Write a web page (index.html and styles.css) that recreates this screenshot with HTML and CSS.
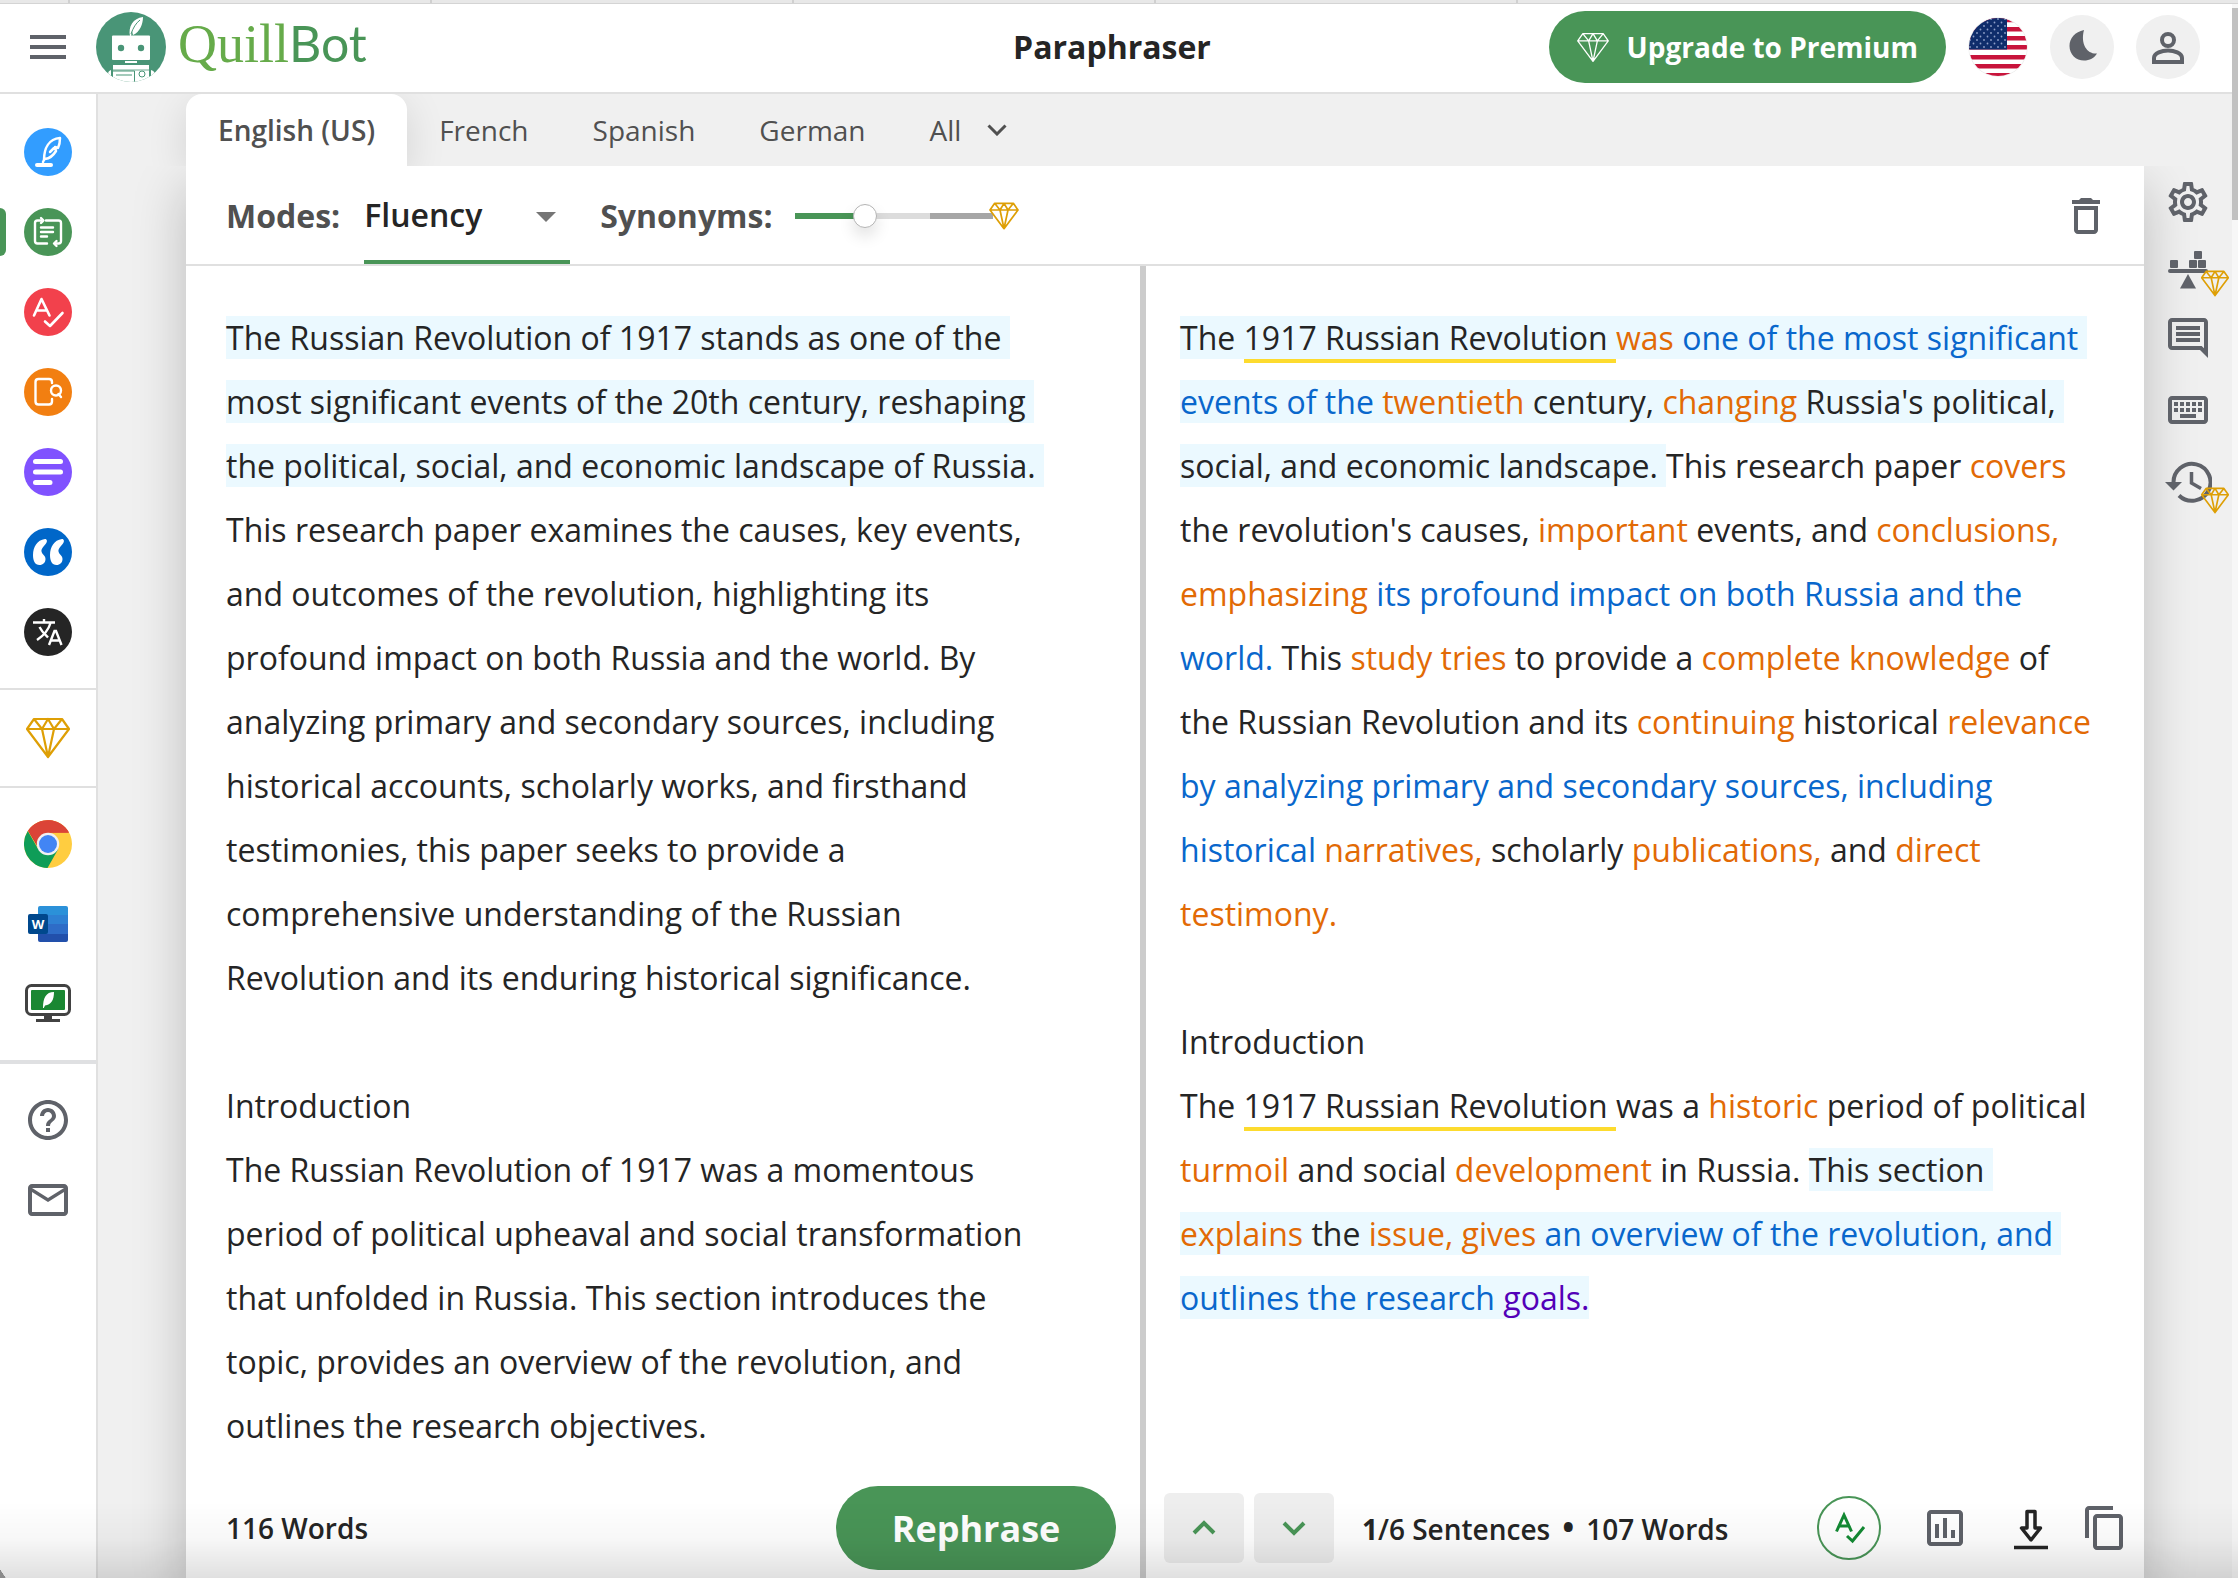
FILE: index.html
```html
<!DOCTYPE html>
<html lang="en">
<head>
<meta charset="utf-8">
<title>Paraphraser - QuillBot</title>
<meta name="viewport" content="width=device-width, initial-scale=1">
<link rel="stylesheet" href="styles.css">
</head>
<body>
<svg class="defs" aria-hidden="true">
  <symbol id="diamond" viewBox="0 0 44 42">
    <path d="M8 2H36L43 12L22 40L1 12ZM1 12H43M8 2L16 12L22 2L28 12L36 2M16 12L22 40L28 12" fill="none" stroke="currentColor" stroke-linejoin="round"/>
  </symbol>
</svg>

<div class="tabstrip"><i></i><i></i><i></i><i></i><i></i><i class="current"></i></div>

<div class="page">
  <div class="content">
    <header class="header">
      <div class="brand">
        <button class="icon-btn" aria-label="Menu">
          <svg class="i48" viewBox="0 0 24 24" fill="currentColor"><path d="M3 18h18v-2H3v2zm0-5h18v-2H3v2zm0-7v2h18V6H3z"/></svg>
        </button>
        <a class="logo" href="#" aria-label="QuillBot home">
          <svg class="logo-mark" viewBox="0 0 70 70">
            <defs><clipPath id="lc"><circle cx="35" cy="35" r="35"/></clipPath></defs>
            <circle cx="35" cy="35" r="35" fill="#499577"/>
            <g clip-path="url(#lc)">
              <rect x="16" y="23.500" width="38" height="24.500" rx="1" fill="#fff"/>
              <circle cx="25" cy="36" r="3.200" fill="#499577"/><circle cx="45" cy="36" r="3.200" fill="#499577"/>
              <path d="M34 24C32 15 37 6 47 5C47 12 44 20 37 23L36 19L35 24Z" fill="#fff"/>
              <path d="M35 22C37 16 40 11 44 8" stroke="#499577" fill="none"/>
              <rect x="29" y="49" width="12" height="2" fill="#fff"/>
              <rect x="17" y="53" width="36" height="17" fill="#fff"/>
              <path d="M12 70V62Q12 59 15 58V70ZM55 58Q59 59 59 63V70H55Z" fill="#fff"/>
              <path d="M16.500 70V59H38.500V70M20 63H36" stroke="#499577" fill="none"/>
              <circle cx="46" cy="62" r="3" stroke="#499577" fill="none"/>
              <path d="M17 58H53" stroke="#499577" stroke-width=".8"/>
            </g>
          </svg>
          <span class="wordmark"><span class="wm-quill">Quill</span><span class="wm-bot">Bot</span></span>
        </a>
      </div>
      <h1 class="title">Paraphraser</h1>
      <div class="header-actions">
        <button class="upgrade"><svg class="gem-up" stroke-width="1.800"><use href="#diamond"/></svg>Upgrade to Premium</button>
        <button class="flag" aria-label="Language: US English">
          <svg viewBox="0 0 60 60">
            <defs><clipPath id="fc"><circle cx="30" cy="30" r="29"/></clipPath>
            <pattern id="stars" width="7" height="7" patternUnits="userSpaceOnUse"><circle cx="2" cy="2" r=".9" fill="#8fa0c8"/><circle cx="5.500" cy="5.500" r=".9" fill="#8fa0c8"/></pattern></defs>
            <circle cx="30" cy="30" r="30" fill="#f0f0f0"/>
            <g clip-path="url(#fc)">
              <rect width="60" height="60" fill="#fff"/>
              <path d="M0 3H60M0 12.300H60M0 21.200H60M0 30.300H60M0 40.300H60M0 49.300H60M0 58.300H60" stroke="#c8143c" stroke-width="4.600"/>
              <rect width="39" height="32.500" fill="#0f2d6b"/><rect width="39" height="32" fill="url(#stars)"/>
            </g>
          </svg>
        </button>
        <button class="round" aria-label="Dark mode"><svg viewBox="0 0 64 64" fill="currentColor"><path d="M34 15C25 17 19.500 23 19.500 31C19.500 39.500 26 45.500 34 45.500C39.500 45.500 44.500 43 47 38.500C38 39.500 30 30 34 15Z"/></svg></button>
        <button class="round" aria-label="Account"><svg viewBox="0 0 64 64" fill="none" stroke="currentColor" stroke-width="4"><circle cx="32" cy="25" r="6"/><path d="M18 47V43C18 38 26 35.500 32 35.500S46 38 46 43V47Z"/></svg></button>
      </div>
    </header>

    <div class="app">
      <nav class="sidebar" aria-label="Tools">
        <ul class="tools">
          <li><a href="#" aria-label="Co-writer"><svg viewBox="0 0 48 48"><circle cx="24" cy="24" r="24" fill="#329dff"/><g fill="none" stroke="#fff" stroke-width="2.500" stroke-linecap="round" stroke-linejoin="round"><path d="M20 32C20 20 25 11 36 10C36 14 35.500 17 34 20L31 19L32 23C29 28 25 30.500 21 31M20 32L19 34M26 24L30 20"/><path d="M13 37H27" stroke-width="4"/></g></svg></a></li>
          <li class="active"><a href="#" aria-label="Paraphraser" aria-current="page"><svg viewBox="0 0 48 48"><circle cx="24" cy="24" r="24" fill="#499557"/><g fill="none" stroke="#fff" stroke-width="2.400" stroke-linecap="round" stroke-linejoin="round"><path d="M17 12.500H13.500Q11 12.500 11 15V33Q11 35.500 13.500 35.500H23M31 35.500H34.500Q37 35.500 37 33V15Q37 12.500 34.500 12.500H22"/><path d="M17 10L19.500 12.500L17 15M32.500 33L30 35.500L32.500 38M17 19.500H29M17 24H29M17 28.500H23"/></g></svg></a></li>
          <li><a href="#" aria-label="Grammar checker"><svg viewBox="0 0 48 48"><circle cx="24" cy="24" r="24" fill="#f2414c"/><g fill="none" stroke="#fff" stroke-width="2.600" stroke-linecap="round" stroke-linejoin="round"><path d="M10 27.500L17.500 11L25.500 27.500M13 22.500H22.500"/><path d="M21 33.500L26 38L38.500 25"/></g></svg></a></li>
          <li><a href="#" aria-label="Plagiarism checker"><svg viewBox="0 0 48 48"><circle cx="24" cy="24" r="24" fill="#f27f11"/><g fill="none" stroke="#fff" stroke-width="2.400" stroke-linecap="round"><path d="M28 15V14Q28 11 25 11H14.500Q11.500 11 11.500 14V33.500Q11.500 36.500 14.500 36.500H25Q28 36.500 28 33.500V31"/><circle cx="32" cy="22.500" r="5"/><path d="M34.500 26L37 29"/></g></svg></a></li>
          <li><a href="#" aria-label="Summarizer"><svg viewBox="0 0 48 48"><circle cx="24" cy="24" r="24" fill="#8052ff"/><path d="M11.500 13.500H36.500M11.500 24H36.500M11.500 34.500H26" stroke="#fff" stroke-width="5" stroke-linecap="round"/></svg></a></li>
          <li><a href="#" aria-label="Citation generator"><svg viewBox="0 0 48 48"><circle cx="24" cy="24" r="24" fill="#0067c9"/><g fill="#fff"><path id="q" d="M21 11C13 12 9 19 9 27C9 33 11 37 15.500 37C19 37 21.500 34.500 21.500 31C21.500 27 18.500 27.500 17.500 23.500C17 21 20 18 22 15.500C24 12.500 22.500 11 21 11Z"/><use href="#q" x="17"/></g></svg></a></li>
          <li><a href="#" aria-label="Translator"><svg viewBox="0 0 48 48"><circle cx="24" cy="24" r="24" fill="#252525"/><g fill="none" stroke="#fff" stroke-width="2.400"><path d="M9 14.500H31M20 11V15M26.500 15C24.500 22 19 28 13 32M15.500 19C18 24 21 26.500 24 29.500"/><path d="M25 37L30.500 23H32L37.500 37M27 32.500H35.500"/></g></svg></a></li>
        </ul>
        <ul class="premium">
          <li><a href="#" aria-label="Premium"><svg class="gem-side" stroke-width="2.200"><use href="#diamond"/></svg></a></li>
        </ul>
        <ul class="extensions">
          <li><a href="#" aria-label="Chrome extension"><svg viewBox="0 0 48 48"><circle cx="24" cy="24" r="24" fill="#ffcd40"/><path d="M24 24L4.200 10.500A24 24 0 0 1 44.900 12.500H24Z" fill="#db4437"/><path d="M3.800 11A24 24 0 0 0 23.500 48L34 29.500L24 24L13.800 28.500Z" fill="#0f9d58"/><path d="M4.200 11L13.700 27L24 13L44.900 12.800H24Z" fill="#c23a2e"/><path d="M4.200 10.500A24 24 0 0 1 44.900 12.700H24L13.500 25Z" fill="#db4437"/><circle cx="24" cy="24" r="11.200" fill="#f1f1f1"/><circle cx="24" cy="24" r="9" fill="#4285f4"/></svg></a></li>
          <li><a href="#" aria-label="Word add-in"><svg viewBox="0 0 48 48"><path d="M16 6H42a2 2 0 0 1 2 2V15H14V8a2 2 0 0 1 2-2Z" fill="#2b91d9"/><path d="M14 15H44V24H14Z" fill="#2e80d3"/><path d="M14 24H44V34H14Z" fill="#2e6cc7"/><path d="M14 34H44V40a2 2 0 0 1-2 2H16a2 2 0 0 1-2-2Z" fill="#2250ab"/><rect x="4" y="14" width="20" height="20" rx="2" fill="#00488d"/><text x="14" y="29" class="word-w">W</text></svg></a></li>
          <li><a href="#" aria-label="Desktop app"><svg viewBox="0 0 48 48"><rect x="2.500" y="5.500" width="43" height="29" rx="5" fill="#fff" stroke="#424242" stroke-width="3"/><rect x="7" y="10" width="34" height="20" rx="1" fill="#1a8732"/><path d="M19 28C19 18 22 12 30 12C30 20 27 25 21 25.500L19.800 28Z" fill="#fff"/><path d="M20 35H28V39H36V42H12V39H20Z" fill="#424242"/></svg></a></li>
        </ul>
        <ul class="support">
          <li><a href="#" aria-label="Help"><svg viewBox="0 0 24 24" fill="currentColor"><path d="M11 18h2v-2h-2v2zm1-16C6.480 2 2 6.480 2 12s4.480 10 10 10 10-4.480 10-10S17.520 2 12 2zm0 18c-4.410 0-8-3.590-8-8s3.590-8 8-8 8 3.590 8 8-3.590 8-8 8zm0-14c-2.210 0-4 1.790-4 4h2c0-1.100.9-2 2-2s2 .9 2 2c0 2-3 1.750-3 5h2c0-2.250 3-2.500 3-5 0-2.210-1.790-4-4-4z"/></svg></a></li>
          <li><a href="#" aria-label="Contact"><svg viewBox="0 0 24 24" fill="currentColor"><path d="M22 6c0-1.100-.9-2-2-2H4c-1.100 0-2 .9-2 2v12c0 1.100.9 2 2 2h16c1.100 0 2-.9 2-2V6zm-2 0l-8 5-8-5h16zm0 12H4V8l8 5 8-5v10z"/></svg></a></li>
        </ul>
      </nav>

      <main class="workspace">
        <div class="langs" role="tablist">
          <button role="tab" aria-selected="true" class="lang selected">English (US)</button>
          <button role="tab" class="lang">French</button>
          <button role="tab" class="lang">Spanish</button>
          <button role="tab" class="lang">German</button>
          <button class="lang lang-all">All<svg viewBox="0 0 20 12"><path d="M1.500 1.500L10 10L18.500 1.500" fill="none" stroke="currentColor" stroke-width="3"/></svg></button>
        </div>
        <section class="card">
          <div class="toolbar">
            <label class="tool-label" for="mode">Modes:</label>
            <div class="select-wrap"><select id="mode" class="mode"><option>Fluency</option><option>Standard</option></select></div>
            <label class="tool-label" for="syn">Synonyms:</label>
            <div class="slider"><input id="syn" type="range" min="0" max="3" value="1"><svg class="gem-slider" stroke-width="2.600"><use href="#diamond"/></svg></div>
            <button class="icon-btn trash" aria-label="Delete text"><svg class="i48" viewBox="0 0 24 24" fill="currentColor"><path d="M6 19c0 1.100.9 2 2 2h8c1.100 0 2-.9 2-2V7H6v12zM8 9h8v10H8V9zm7.500-5l-1-1h-5l-1 1H5v2h14V4z"/></svg></button>
          </div>
          <div class="panels">
            <section class="panel panel-in">
              <div class="text"><p><mark>The Russian Revolution of 1917 stands as one of the most significant events of the 20th century, reshaping the political, social, and economic landscape of Russia. </mark>This research paper examines the causes, key events, and outcomes of the revolution, highlighting its profound impact on both Russia and the world. By analyzing primary and secondary sources, including historical accounts, scholarly works, and firsthand testimonies, this paper seeks to provide a comprehensive understanding of the Russian Revolution and its enduring historical significance.</p><p><br></p><p>Introduction</p><p>The Russian Revolution of 1917 was a momentous period of political upheaval and social transformation that unfolded in Russia. This section introduces the topic, provides an overview of the revolution, and outlines the research objectives.</p></div>
              <footer class="panel-foot">
                <span class="count">116 Words</span>
                <button class="rephrase">Rephrase</button>
              </footer>
            </section>
            <section class="panel panel-out">
              <div class="text"><p><mark>The <span class="kept">1917 Russian Revolution </span><span class="chg">was</span> <span class="same">one of the most significant events of the</span> <span class="chg">twentieth</span> century, <span class="chg">changing</span> Russia's political, social, and economic landscape. </mark>This research paper <span class="chg">covers</span> the revolution's causes, <span class="chg">important</span> events, and <span class="chg">conclusions, emphasizing</span> <span class="same">its profound impact on both Russia and the world.</span> This <span class="chg">study tries</span> to provide a <span class="chg">complete knowledge</span> of the Russian Revolution and its <span class="chg">continuing</span> historical <span class="chg">relevance</span> <span class="same">by analyzing primary and secondary sources, including historical</span> <span class="chg">narratives,</span> scholarly <span class="chg">publications,</span> and <span class="chg">direct testimony.</span></p><p><br></p><p>Introduction</p><p>The <span class="kept">1917 Russian Revolution </span>was a <span class="chg">historic</span> period of political <span class="chg">turmoil</span> and social <span class="chg">development</span> in Russia. <mark>This section <span class="chg">explains</span> the <span class="chg">issue, gives</span> <span class="same">an overview of the revolution, and outlines the research</span> <span class="struct">goals.</span></mark></p></div>
              <footer class="panel-foot">
                <div class="steps">
                  <button class="step" aria-label="Previous sentence"><svg viewBox="0 0 24 16"><path d="M2 13L12 3L22 13" fill="none" stroke="currentColor" stroke-width="4"/></svg></button>
                  <button class="step" aria-label="Next sentence"><svg viewBox="0 0 24 16"><path d="M2 3L12 13L22 3" fill="none" stroke="currentColor" stroke-width="4"/></svg></button>
                </div>
                <span class="count"><b>1</b>/6 Sentences <span class="dot">•</span> 107 Words</span>
                <div class="out-actions">
                  <button class="icon-btn grammar" aria-label="Check grammar"><svg viewBox="0 0 64 64" fill="none" stroke="#138a33" stroke-width="3"><circle cx="32" cy="32" r="31" stroke="#499557" stroke-width="2"/><path d="M19.500 35.500L27 19L34.500 35.500M22 30H32M30 40L35.500 45L47 31"/></svg></button>
                  <button class="icon-btn stats" aria-label="Statistics"><svg class="i48" viewBox="0 0 24 24" fill="currentColor"><path d="M19 3H5c-1.100 0-2 .9-2 2v14c0 1.100.9 2 2 2h14c1.100 0 2-.9 2-2V5c0-1.100-.9-2-2-2zm0 16H5V5h14v14zM7 10h2v7H7zm4-3h2v10h-2zm4 6h2v4h-2z"/></svg></button>
                  <button class="icon-btn dark" aria-label="Export"><svg class="i48" viewBox="0 0 48 48" fill="none" stroke="currentColor" stroke-width="3.500"><path d="M20 7.500H28V24H33.500L24 36L14.500 24H20Z" stroke-linejoin="round"/><path d="M7 43.500H41"/></svg></button>
                  <button class="icon-btn" aria-label="Copy"><svg class="i48" viewBox="0 0 24 24" fill="currentColor"><path d="M16 1H4c-1.100 0-2 .9-2 2v14h2V3h12V1zm3 4H8c-1.100 0-2 .9-2 2v14c0 1.100.9 2 2 2h11c1.100 0 2-.9 2-2V7c0-1.100-.9-2-2-2zm0 16H8V7h11v14z"/></svg></button>
                </div>
              </footer>
            </section>
          </div>
        </section>
      </main>

      <aside class="rail">
        <button class="icon-btn" aria-label="Settings"><svg class="i48" viewBox="0 0 24 24" fill="currentColor"><path d="M19.430 12.980c.04-.32.07-.64.07-.98 0-.34-.03-.66-.07-.98l2.110-1.650c.19-.15.24-.42.12-.64l-2-3.460c-.09-.16-.26-.25-.44-.25-.06 0-.12.01-.17.03l-2.490 1c-.52-.4-1.080-.73-1.690-.98l-.38-2.650C14.460 2.180 14.250 2 14 2h-4c-.25 0-.46.18-.49.42l-.38 2.650c-.61.25-1.170.59-1.690.98l-2.490-1c-.06-.02-.12-.03-.18-.03-.17 0-.34.09-.43.25l-2 3.460c-.13.22-.07.49.12.64l2.110 1.650c-.04.32-.07.65-.07.98 0 .33.03.66.07.98l-2.110 1.650c-.19.15-.24.42-.12.64l2 3.460c.09.16.26.25.44.25.06 0 .12-.01.17-.03l2.490-1c.52.4 1.080.73 1.690.98l.38 2.650c.03.24.24.42.49.42h4c.25 0 .46-.18.49-.42l.38-2.650c.61-.25 1.170-.59 1.690-.98l2.490 1c.06.02.12.03.18.03.17 0 .34-.09.43-.25l2-3.460c.12-.22.07-.49-.12-.64l-2.110-1.650zm-1.980-1.710c.04.31.05.52.05.73 0 .21-.02.43-.05.73l-.14 1.130.89.7 1.080.84-.7 1.210-1.270-.51-1.040-.42-.9.68c-.43.32-.84.56-1.250.73l-1.060.43-.16 1.130-.2 1.350h-1.400l-.19-1.350-.16-1.130-1.060-.43c-.43-.18-.83-.41-1.230-.71l-.91-.7-1.060.43-1.270.51-.7-1.210 1.080-.84.89-.7-.14-1.130c-.03-.31-.05-.54-.05-.74s.02-.43.05-.73l.14-1.130-.89-.7-1.080-.84.7-1.210 1.270.51 1.040.42.9-.68c.43-.32.84-.56 1.250-.73l1.060-.43.16-1.130.2-1.350h1.390l.19 1.350.16 1.130 1.060.43c.43.18.83.41 1.230.71l.91.7 1.060-.43 1.270-.51.7 1.210-1.070.85-.89.7.14 1.130zM12 8c-2.210 0-4 1.790-4 4s1.790 4 4 4 4-1.790 4-4-1.790-4-4-4zm0 6c-1.100 0-2-.9-2-2s.9-2 2-2 2 .9 2 2-.9 2-2 2z"/></svg></button>
        <button class="icon-btn" aria-label="Compare modes"><svg class="i48" viewBox="0 0 48 48" fill="currentColor"><rect x="6" y="14" width="8" height="8" rx="1"/><rect x="30" y="5" width="8" height="8" rx="1"/><rect x="25" y="14" width="8" height="8" rx="1"/><rect x="34" y="14" width="8" height="8" rx="1"/><rect x="4" y="23" width="40" height="4" rx="2"/><path d="M24 28L32 42.500H16Z"/></svg><svg class="gem-badge" stroke-width="2.600"><use href="#diamond"/></svg></button>
        <button class="icon-btn" aria-label="Feedback"><svg class="i48" viewBox="0 0 24 24" fill="currentColor"><path d="M21.990 4c0-1.100-.89-2-1.990-2H4c-1.100 0-2 .9-2 2v12c0 1.100.9 2 2 2h14l4 4-.01-18zM20 4v13.170L18.830 16H4V4h16zM6 12h12v2H6zm0-3h12v2H6zm0-3h12v2H6z"/></svg></button>
        <button class="icon-btn spaced" aria-label="Hotkeys"><svg class="i48" viewBox="0 0 24 24" fill="currentColor"><path d="M20 7v10H4V7h16m0-2H4c-1.100 0-1.990.9-1.990 2L2 17c0 1.100.9 2 2 2h16c1.100 0 2-.9 2-2V7c0-1.100-.9-2-2-2zm-9 3h2v2h-2V8zm0 3h2v2h-2v-2zM8 8h2v2H8V8zm0 3h2v2H8v-2zm-3 0h2v2H5v-2zm0-3h2v2H5V8zm3 6h8v2H8v-2zm6-3h2v2h-2v-2zm0-3h2v2h-2V8zm3 3h2v2h-2v-2zm0-3h2v2h-2V8z"/></svg></button>
        <button class="icon-btn spaced" aria-label="History"><svg class="i48" viewBox="0 0 48 48" fill="none" stroke="currentColor" stroke-width="4"><path d="M9.500 25A18.500 18.500 0 1 1 15 37.500"/><path d="M27.500 14V25L37 30.500" stroke-width="3.500"/><path d="M1 24H18L9.500 32.500Z" fill="currentColor" stroke="none"/></svg><svg class="gem-badge low" stroke-width="2.600"><use href="#diamond"/></svg></button>
      </aside>
    </div>
  </div>
  <div class="scrollbar" aria-hidden="true"><div class="thumb"></div></div>
</div>
<div class="bottom-shade"></div>
</body>
</html>
```
FILE: styles.css
```css
:root {
  --green: #499557;
  --ink: #252525;
  --icon: #5f6269;
  --line: #e0e0e0;
  --gold: #de9f05;
}

* { box-sizing: border-box; }

body {
  margin: 0;
  background: #f0f0f0;
  color: var(--ink);
  font-family: "Open Sans", "Noto Sans", sans-serif;
  font-size: 28px;
}

button, select, input { font: inherit; color: inherit; margin: 0; }
button { border: 0; padding: 0; background: none; cursor: pointer; }
ul { list-style: none; margin: 0; padding: 0; }
p, h1 { margin: 0; }
svg { display: block; }

.defs { position: absolute; width: 0; height: 0; }

.tabstrip {
  display: grid;
  grid-template-columns: 70px repeat(4, minmax(0, 362fr)) minmax(0, 720fr);
  height: 4px;
  background: #e8e8e8;
  border-bottom: 1px solid #d4d4d4;
}
.tabstrip i { border-right: 2px solid #d0d0d0; }
.tabstrip .current { border: 0; }

.page { display: flex; min-height: calc(100vh - 4px); }
.content { flex: 1; min-width: 0; display: flex; flex-direction: column; }
.scrollbar { width: 6px; padding-top: 4px; background: #f7f7f7; }
.thumb { height: 212px; background: #c1c1c1; }

/* Header */
.header {
  display: grid;
  grid-template-columns: 1fr auto 1fr;
  align-items: center;
  height: 90px;
  padding: 0 32px 2px 24px;
  background: #fff;
  border-bottom: 2px solid var(--line);
}
.brand, .logo, .header-actions { display: flex; align-items: center; }
.brand { gap: 24px; }
.logo { gap: 12px; text-decoration: none; }
.logo-mark { width: 70px; height: 70px; }
.wordmark { line-height: 68px; white-space: nowrap; }
.wm-quill { font-family: "Liberation Serif", serif; font-size: 54px; color: #66ab4a; }
.wm-bot { font-family: Lato, sans-serif; font-size: 50px; color: var(--green); }
.title { font-size: 32px; font-weight: 700; line-height: 44px; }
.header-actions { justify-content: flex-end; gap: 22px; }
.upgrade {
  display: flex;
  align-items: center;
  gap: 18px;
  height: 72px;
  padding: 0 28px;
  border-radius: 36px;
  background: var(--green);
  color: #fff;
  font-weight: 700;
  white-space: nowrap;
}
.gem-up { width: 32px; height: 31px; }
.flag, .flag svg { width: 60px; height: 60px; border-radius: 50%; }
.round { width: 64px; height: 64px; border-radius: 50%; background: #f0f0f0; color: var(--icon); }

.icon-btn { position: relative; color: var(--icon); flex: none; }
.i48 { width: 48px; height: 48px; }
.dark { color: var(--ink); }

/* Layout */
.app { flex: 1; display: flex; }

.sidebar {
  flex: none;
  width: 98px;
  background: #fff;
  border-right: 2px solid var(--line);
}
.sidebar ul { display: flex; flex-direction: column; align-items: center; gap: 32px; }
.sidebar li { display: flex; justify-content: center; width: 100%; }
.sidebar a { display: grid; place-items: center; width: 48px; height: 48px; color: var(--icon); }
.sidebar a svg { width: 48px; height: 48px; }
.sidebar .tools { padding: 34px 0 32px; border-bottom: 2px solid var(--line); }
.sidebar .premium { padding: 24px 0; border-bottom: 2px solid var(--line); }
.sidebar .extensions { padding: 32px 0; border-bottom: 4px solid #dfe0e2; }
.sidebar .support { padding: 32px 0; }
.sidebar a .gem-side { width: 44px; height: 42px; color: var(--gold); }
.sidebar .active { justify-content: flex-start; }
.active::before { content: ""; width: 6px; height: 48px; margin-right: 18px; border-radius: 0 6px 6px 0; background: var(--green); }
.word-w { font: 700 13px "Open Sans", sans-serif; fill: #fff; text-anchor: middle; }

.workspace { flex: 1; min-width: 0; display: flex; flex-direction: column; margin-left: 88px; }

.langs { display: flex; height: 72px; clip-path: inset(0 0 0 -60px); }
.lang { padding: 0 32px; line-height: 38px; color: #505050; white-space: nowrap; }
.selected {
  background: #fff;
  border-radius: 16px 16px 0 0;
  font-weight: 600;
  box-shadow: 0 10px 40px rgba(0, 0, 0, .12);
}
.lang-all { display: flex; align-items: center; gap: 26px; }
.lang-all svg { width: 20px; height: 12px; }

.card {
  flex: 1;
  display: flex;
  flex-direction: column;
  background: #fff;
  box-shadow: 0 20px 50px rgba(0, 0, 0, .22);
  clip-path: inset(0 -88px 0 -88px);
}

.toolbar {
  display: flex;
  align-items: center;
  height: 100px;
  padding: 2px 34px 0 40px;
  border-bottom: 2px solid var(--line);
}
.tool-label { font-size: 32px; font-weight: 700; color: #505050; line-height: 44px; }
.select-wrap {
  position: relative;
  align-self: stretch;
  width: 206px;
  margin: 0 30px 0 24px;
  border-bottom: 4px solid var(--green);
}
.select-wrap::after {
  content: "";
  position: absolute;
  right: 14px;
  top: 44px;
  border: 10px solid transparent;
  border-top-color: #757575;
  border-bottom: 0;
  pointer-events: none;
}
.mode { appearance: none; width: 100%; height: 100%; border: 0; padding: 0; background: none; font-size: 32px; font-weight: 600; }
.slider { display: flex; align-items: center; margin-left: 22px; }
.slider input {
  appearance: none;
  width: 198px;
  height: 24px;
  background: linear-gradient(90deg, var(--green) 68px, #dcdcdc 68px 135px, #a6a6a6 135px) center / 100% 6px no-repeat;
  border-radius: 3px;
}
.slider input::-webkit-slider-thumb {
  appearance: none;
  width: 24px;
  height: 24px;
  border: 1px solid #b4b4b4;
  border-radius: 50%;
  background: #fff;
  box-shadow: 0 8px 16px rgba(0, 0, 0, .12);
}
.gem-slider { position: relative; width: 30px; height: 28px; margin-left: -4px; color: var(--gold); }
.trash { margin-left: auto; }

/* Editor panels */
.panels { flex: 1; display: grid; grid-template-columns: minmax(0, 960fr) minmax(0, 998fr); }
.panel { display: flex; flex-direction: column; padding-top: 40px; }
.panel-in { border-right: 6px solid #ccc; }
.text { font-size: 32px; line-height: 64px; white-space: pre-wrap; }
.panel-in .text { padding: 0 90px 0 40px; }
.panel-out .text { padding: 0 44px 0 34px; }
mark { background: #ebf9ff; color: inherit; }
.chg { color: #e26a05; }
.same { color: #0967cc; }
.struct { color: #5300b8; }
.kept { border-bottom: 4px solid #fddb2e; }

.panel-foot { display: flex; align-items: center; height: 84px; margin: auto 0 8px; }
.panel-in .panel-foot { justify-content: space-between; padding: 0 24px 0 40px; }
.panel-out .panel-foot { padding: 0 15px 0 18px; }
.count { font-weight: 600; line-height: 38px; white-space: nowrap; }
.count b { font-weight: 700; }
.dot { margin: 0 4px; font-size: 36px; line-height: 1; }
.rephrase { width: 280px; height: 84px; border-radius: 42px; background: var(--green); color: #fff; font-size: 36px; font-weight: 700; }
.steps { display: flex; gap: 10px; margin-right: 28px; }
.step { display: grid; place-items: center; width: 80px; height: 70px; border-radius: 6px; background: #eee; color: var(--green); }
.step svg { width: 24px; height: 16px; }
.out-actions { display: flex; align-items: center; gap: 26px; margin-left: auto; }
.grammar svg { width: 64px; height: 64px; }
.stats { margin: 0 12px 0 14px; }

/* Right rail */
.rail { position: relative; flex: none; display: flex; flex-direction: column; align-items: center; gap: 20px; width: 88px; padding-top: 84px; }
.spaced { margin-top: 4px; }
.gem-badge { position: absolute; right: -17px; bottom: -3px; width: 28px; height: 27px; color: var(--gold); }
.gem-badge.low { bottom: -8px; }

.bottom-shade {
  position: fixed;
  inset: auto 0 0;
  height: 76px;
  background: linear-gradient(transparent, rgba(0, 0, 0, .03) 50%, rgba(0, 0, 0, .12));
  pointer-events: none;
}
.bottom-shade::before {
  content: "";
  position: absolute;
  left: 0;
  bottom: 0;
  width: 6px;
  height: 9px;
  background: linear-gradient(to top right, #8a8a8a 46%, transparent 50%);
}
```
